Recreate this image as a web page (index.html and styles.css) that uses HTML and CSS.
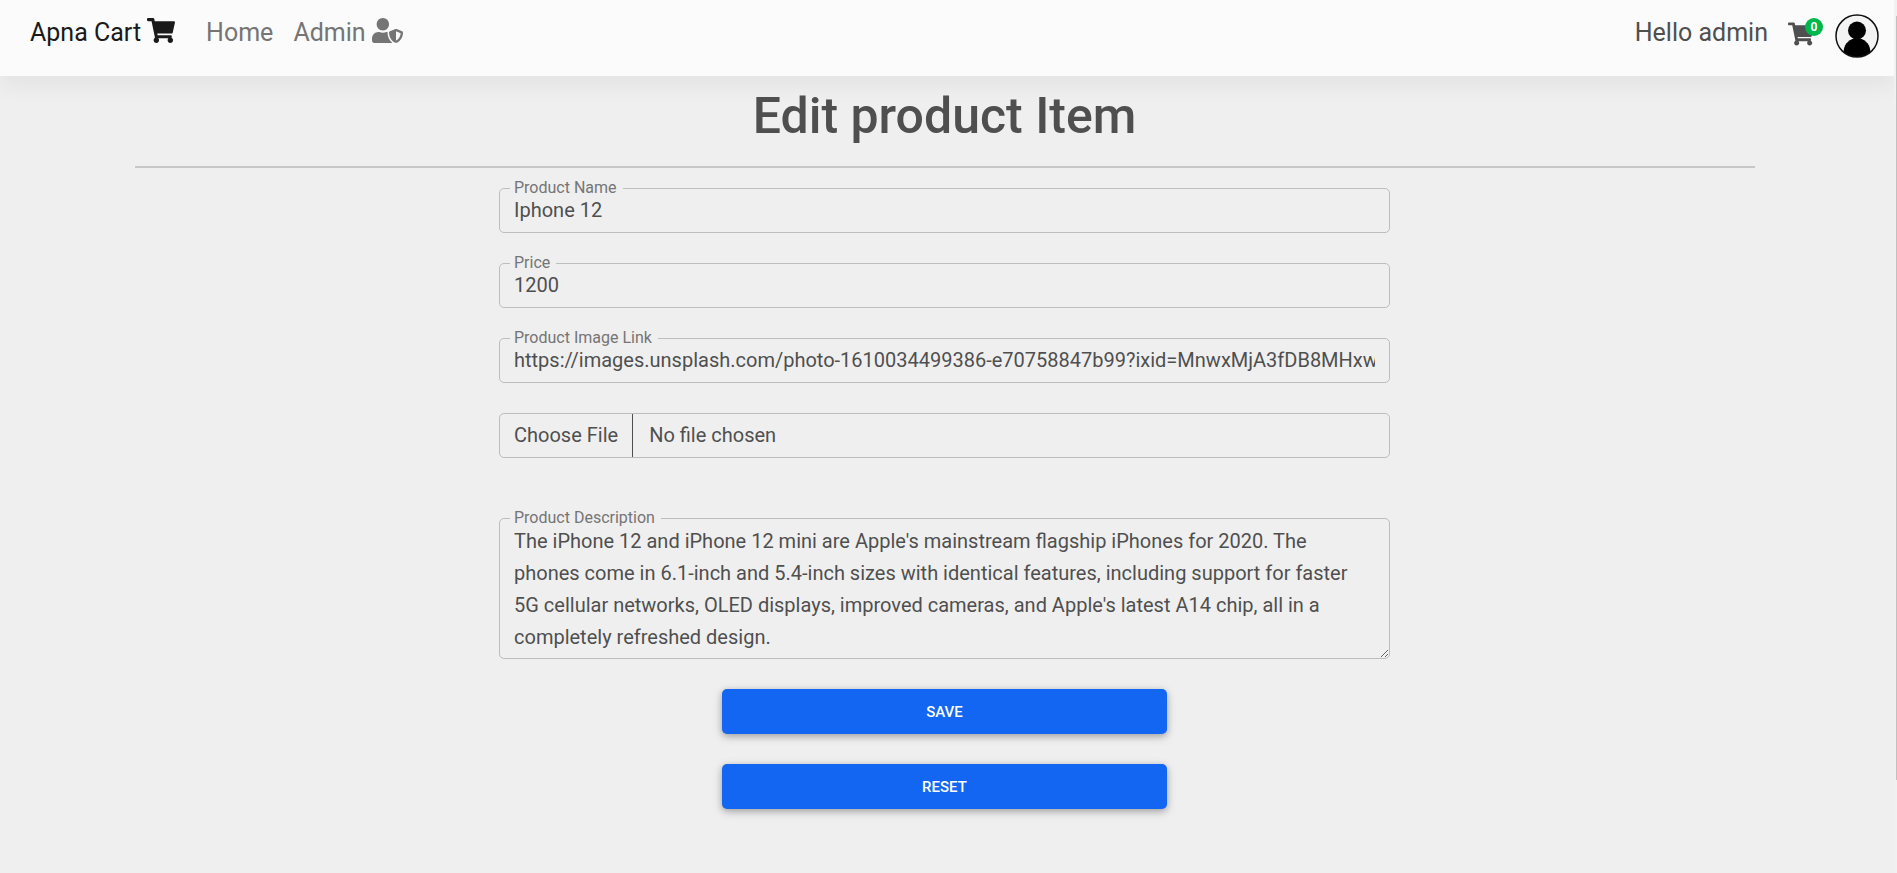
FILE: index.html
```html
<!DOCTYPE html>
<html lang="en">
<head>
<meta charset="utf-8">
<title>Apna Cart - Edit product</title>
<link rel="stylesheet" href="styles.css">
</head>
<body>
<div class="page">
<header class="navbar">
  <a class="brand" href="#">Apna Cart <svg class="icon-cart" viewBox="0 0 576 512" aria-hidden="true"><path d="M528.12 301.319l47.273-208C578.806 78.301 567.391 64 551.99 64H159.208l-9.166-44.81C147.758 8.021 137.93 0 126.529 0H24C10.745 0 0 10.745 0 24v16c0 13.255 10.745 24 24 24h69.883l70.248 343.435C147.325 417.1 136 435.222 136 456c0 30.928 25.072 56 56 56s56-25.072 56-56c0-15.674-6.447-29.835-16.824-40h209.647C430.447 426.165 424 440.326 424 456c0 30.928 25.072 56 56 56s56-25.072 56-56c0-22.172-12.888-41.332-31.579-50.405l5.517-24.276c3.413-15.018-8.002-29.319-23.403-29.319H218.117l-6.545-32h293.145c11.206 0 20.92-7.754 23.403-18.681z"/></svg></a>
  <nav class="links">
    <a href="#">Home</a>
    <a href="#">Admin <svg class="icon-admin" viewBox="0 0 640 512" aria-hidden="true"><path d="M622.3 271.1l-115.2-45c-4.1-1.6-12.6-3.7-22.2 0l-115.2 45c-10.7 4.2-17.7 14-17.7 24.9 0 111.6 68.7 188.8 132.9 213.9 9.6 3.7 18 1.6 22.2 0C558.4 489.9 640 420.5 640 296c0-10.9-7-20.700-17.700-24.900zM496 462.400V273.300l95.500 37.300c-5.600 87.100-60.900 135.400-95.500 151.800zM224 256c70.700 0 128-57.300 128-128S294.700 0 224 0 96 57.300 96 128s57.300 128 128 128zm96 40c0-2.500.8-4.800 1.100-7.200-2.500-.1-4.900-.8-7.500-.8h-16.700c-22.200 10.200-46.900 16-72.900 16s-50.600-5.800-72.900-16h-16.700C60.200 288 0 348.200 0 422.400V464c0 26.500 21.500 48 48 48h352c6.800 0 13.300-1.500 19.200-4-54-42.900-99.200-116.700-99.200-212z"/></svg></a>
  </nav>
  <div class="account">
    <span class="hello">Hello admin</span>
    <a class="cart" href="#" aria-label="Shopping cart"><svg class="icon-cart" viewBox="0 0 576 512" aria-hidden="true"><path d="M528.12 301.319l47.273-208C578.806 78.301 567.391 64 551.99 64H159.208l-9.166-44.81C147.758 8.021 137.93 0 126.529 0H24C10.745 0 0 10.745 0 24v16c0 13.255 10.745 24 24 24h69.883l70.248 343.435C147.325 417.1 136 435.222 136 456c0 30.928 25.072 56 56 56s56-25.072 56-56c0-15.674-6.447-29.835-16.824-40h209.647C430.447 426.165 424 440.326 424 456c0 30.928 25.072 56 56 56s56-25.072 56-56c0-22.172-12.888-41.332-31.579-50.405l5.517-24.276c3.413-15.018-8.002-29.319-23.403-29.319H218.117l-6.545-32h293.145c11.206 0 20.92-7.754 23.403-18.681z"/></svg><span class="badge">0</span></a>
    <a class="avatar" href="#" aria-label="Profile"><svg viewBox="0 0 44 44" aria-hidden="true"><defs><clipPath id="disc"><circle cx="22" cy="22" r="21"/></clipPath></defs><circle cx="22" cy="22" r="21" fill="#f3f3f3"/><g clip-path="url(#disc)"><circle cx="22" cy="16.500" r="9"/><path d="M8.500 44v-5c0-8 4.500-13 10.500-14.500h6c6 1.500 10.500 6.500 10.500 14.500v5z"/></g><circle cx="22" cy="22" r="21" fill="none" stroke="#111" stroke-width="1.500"/></svg></a>
  </div>
</header>
<main class="content">
<div class="container">
  <h1>Edit product Item</h1>
  <hr>
  <form class="form">
    <fieldset class="outline">
      <legend><label for="name">Product Name</label></legend>
      <input id="name" type="text" value="Iphone 12">
    </fieldset>
    <fieldset class="outline">
      <legend><label for="price">Price</label></legend>
      <input id="price" type="text" value="1200">
    </fieldset>
    <fieldset class="outline">
      <legend><label for="link">Product Image Link</label></legend>
      <input id="link" type="text" value="https://images.unsplash.com/photo-1610034499386-e70758847b99?ixid=MnwxMjA3fDB8MHxwaG90by1wYWdl">
    </fieldset>
    <input class="file" type="file" aria-label="Product image file">
    <fieldset class="outline description">
      <legend><label for="desc">Product Description</label></legend>
      <textarea id="desc" rows="4">The iPhone 12 and iPhone 12 mini are Apple's mainstream flagship iPhones for 2020. The phones come in 6.1-inch and 5.4-inch sizes with identical features, including support for faster 5G cellular networks, OLED displays, improved cameras, and Apple's latest A14 chip, all in a completely refreshed design.</textarea>
    </fieldset>
    <button class="btn" type="submit">Save</button>
    <button class="btn" type="reset">Reset</button>
  </form>
</div>
</main>
</div>
<div class="track" aria-hidden="true"><div class="thumb"></div></div>
</body>
</html>
```
FILE: styles.css
```css
* { box-sizing: border-box; }
body {
  margin: 0;
  display: flex;
  min-height: 100vh;
  background: #efefef;
  color: #4f4f4f;
  font: 400 20px/32px Roboto, sans-serif;
}
a { color: inherit; text-decoration: none; }
svg { display: block; fill: currentColor; }
.page { flex: 1; min-width: 0; }
.navbar {
  display: flex;
  align-items: flex-start;
  height: 76px;
  padding: 14px 15px 0 30px;
  background: #fbfbfb;
  box-shadow: 0 10px 20px 0 rgba(0, 0, 0, .05);
  font-size: 25px;
  line-height: 37px;
}
.brand, .links a { display: flex; gap: 6px; }
.brand { color: #1a1a1a; }
.links { display: flex; gap: 20px; margin-left: 31px; color: #757575; }
.icon-cart { width: 28px; height: 25px; margin-top: 4px; }
.icon-admin { width: 31px; height: 25px; margin-top: 4px; }
.account { display: flex; margin-left: auto; }
.cart { position: relative; margin-left: 20px; }
.cart .icon-cart { width: 26px; height: 24px; margin-top: 8px; }
.badge {
  position: absolute;
  top: 4px;
  left: 17px;
  width: 18px;
  border-radius: 9px;
  background: #00b74a;
  color: #fff;
  font-size: 12px;
  font-weight: 700;
  line-height: 18px;
  text-align: center;
}
.avatar { width: 44px; margin-left: 21px; color: #000; }
.content { padding-right: 5px; }
.container { max-width: 1620px; margin: 0 auto; }
h1 {
  margin: 10px 0 20px;
  font-size: 50px;
  line-height: 60px;
  font-weight: 500;
  text-align: center;
}
hr { height: 2px; margin: 0 0 11px; border: 0; background: #c7c7c7; }
.form {
  display: flex;
  flex-direction: column;
  width: 55%;
  margin: 0 auto;
}
.outline {
  display: block;
  min-width: 0;
  height: 54px;
  margin: 0 0 21px;
  padding: 0;
  border: 1px solid #bdbdbd;
  border-radius: 5px;
}
legend {
  height: 18px;
  margin-left: 10px;
  padding: 0 6px 0 4px;
  color: #757575;
  font-size: 16px;
  line-height: 18px;
}
legend label { display: block; }
.outline input, textarea {
  display: block;
  width: 100%;
  margin-top: -2px;
  padding: 0 14px;
  border: 0;
  outline: 0;
  background: transparent;
  color: inherit;
  font: inherit;
}
.outline input { height: 30px; }
.file {
  height: 45px;
  margin: 9px 0 51px;
  border: 1px solid #bdbdbd;
  border-radius: 5px;
  color: inherit;
  font: inherit;
  line-height: 43px;
}
.file::file-selector-button {
  height: 43px;
  margin: 0 16px 0 0;
  padding: 0 14px;
  border: 0;
  border-right: 1px solid #4f4f4f;
  background: transparent;
  color: inherit;
  font: inherit;
}
.outline.description { height: auto; margin-bottom: 30px; }
textarea { height: 133px; resize: vertical; overflow: hidden; }
.btn {
  width: 50%;
  height: 45px;
  margin: 0 auto 30px;
  border: 0;
  border-radius: 5px;
  background: #1266f1;
  box-shadow: 0 2px 6px 0 rgba(0, 0, 0, .25), 0 3px 12px 0 rgba(0, 0, 0, .12);
  color: #fff;
  font: 500 15px/24px Roboto, sans-serif;
  text-transform: uppercase;
}
.track { width: 3px; padding: 16px 0 93px 2px; background: #f1f1f1; }
.thumb { height: 764px; background: #c1c1c1; }
```
